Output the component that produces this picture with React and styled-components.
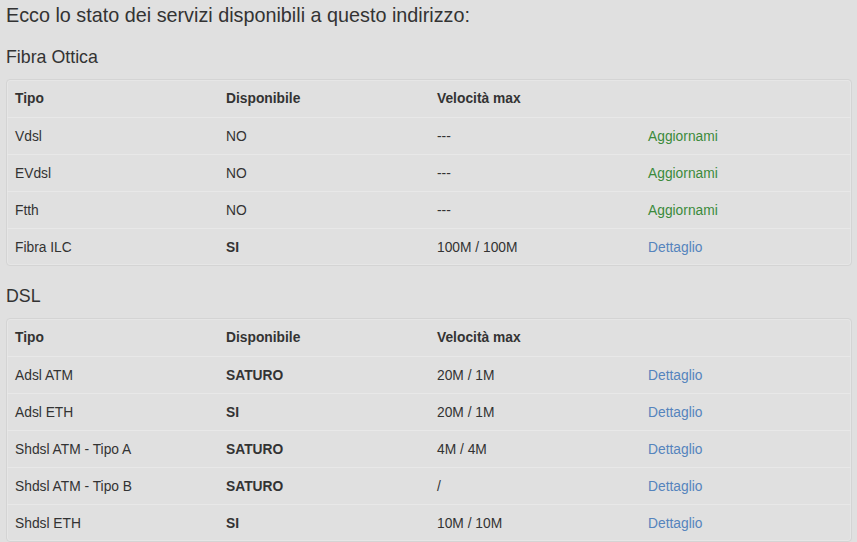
import React from "react";
import styled, { createGlobalStyle } from "styled-components";

const fibra = [
  { tipo: "Vdsl", disp: "NO", vel: "---", link: "Aggiornami" },
  { tipo: "EVdsl", disp: "NO", vel: "---", link: "Aggiornami" },
  { tipo: "Ftth", disp: "NO", vel: "---", link: "Aggiornami" },
  { tipo: "Fibra ILC", disp: "SI", bold: true, vel: "100M / 100M", link: "Dettaglio" },
];

const dsl = [
  { tipo: "Adsl ATM", disp: "SATURO", bold: true, vel: "20M / 1M", link: "Dettaglio" },
  { tipo: "Adsl ETH", disp: "SI", bold: true, vel: "20M / 1M", link: "Dettaglio" },
  { tipo: "Shdsl ATM - Tipo A", disp: "SATURO", bold: true, vel: "4M / 4M", link: "Dettaglio" },
  { tipo: "Shdsl ATM - Tipo B", disp: "SATURO", bold: true, vel: "/", link: "Dettaglio" },
  { tipo: "Shdsl ETH", disp: "SI", bold: true, vel: "10M / 10M", link: "Dettaglio" },
];

const ServiceTable = ({ rows }) => (
  <Card>
    <Row $head>
      <Cell>Tipo</Cell>
      <Cell>Disponibile</Cell>
      <Cell>Velocità max</Cell>
      <Cell />
    </Row>
    {rows.map((r) => (
      <Row key={r.tipo}>
        <Cell>{r.tipo}</Cell>
        <Cell $bold={r.bold}>{r.disp}</Cell>
        <Cell>{r.vel}</Cell>
        <Cell>
          <ActionLink $upgrade={r.link === "Aggiornami"}>{r.link}</ActionLink>
        </Cell>
      </Row>
    ))}
  </Card>
);

const App = () => {
  return (
    <>
      <GlobalStyle />
      <Page>
        <Title>Ecco lo stato dei servizi disponibili a questo indirizzo:</Title>
        <SectionTitle>Fibra Ottica</SectionTitle>
        <ServiceTable rows={fibra} />
        <SectionTitle>DSL</SectionTitle>
        <ServiceTable rows={dsl} />
      </Page>
    </>
  );
};

const GlobalStyle = createGlobalStyle`
  html, body {
    margin: 0;
    background: #e0e0e0;
  }
  body {
    font-family: "Liberation Sans", Arial, sans-serif;
    color: #333;
  }
`;

const Page = styled.div`
  padding: 3px 5px 0 6px;
`;

const Title = styled.h1`
  margin: 0;
  font-size: 19.8px;
  font-weight: normal;
  line-height: 24px;
  color: #333;
`;

const SectionTitle = styled.h2`
  margin: 19px 0 11px;
  font-size: 17.8px;
  font-weight: normal;
  line-height: 22px;
  color: #333;
`;

const Card = styled.div`
  border: 1px solid #d4d4d4;
  border-radius: 4px;
  box-shadow: inset 0 0 0 1px #e6e6e6;
  overflow: hidden;
`;

const Row = styled.div`
  display: grid;
  grid-template-columns: repeat(4, 1fr);
  align-items: center;
  height: 37px;
  box-sizing: border-box;
  font-size: 13.8px;
  font-weight: ${(p) => (p.$head ? "bold" : "normal")};
  border-top: ${(p) => (p.$head ? "none" : "1px solid #e8e8e8")};
`;

const Cell = styled.div`
  padding: 0 8px 0 9px;
  font-weight: ${(p) => (p.$bold ? "bold" : "inherit")};
  margin-left: -1px;
`;

const ActionLink = styled.span`
  color: ${(p) => (p.$upgrade ? "#3b8a3b" : "#5584bd")};
  cursor: pointer;
`;

export default App;
